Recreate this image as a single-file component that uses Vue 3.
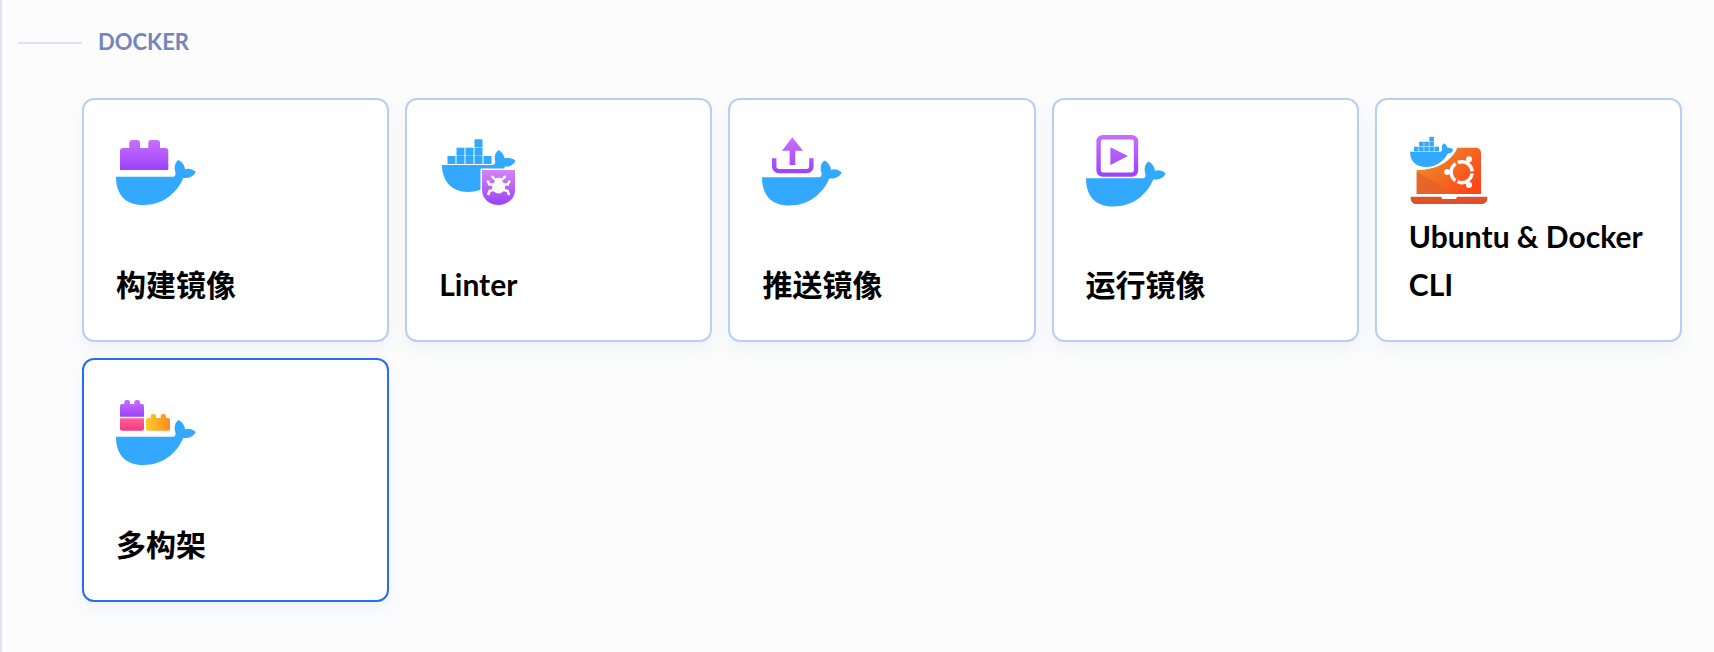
<script setup>
const whale = 'M0 46.7H57C59.5 46.7 60 44 59.3 41.7C58 38 58.5 33 62.3 30C66.5 32 69 36 69 39.6C71 38.3 76 38.3 79.7 42C77.5 46.5 73 48.5 67.3 48C60.5 64 46 75 27.3 75C9 75 0 64 0 46.7Z'
const hull = 'M3 35H53C56 35 56.5 33 56 30C55 26 56.5 22 59.8 20C63 22 65 25 65.8 28.5C69 27.5 74 28 76.5 31C74 35.5 70 37 66 36.5C60 50 46 62 29 62C12 62 3 50 3 35Z'
const smallHull = 'M1 21.7H31C33 21.7 33.5 20 33 18C32.5 16 33.5 14.5 35 13.3C37 14.5 38 16 38.5 18C40.5 17.5 43 18 44.3 20C43 22.5 41 23.5 39 23.3C35 31 27 37 17.7 37C7 37 1 31 1 21.7Z'
const linterBoxes = [
  [8.5, 26], [17.5, 26], [26.5, 26], [35.5, 26], [44.5, 26],
  [17.5, 17.7], [26.5, 17.7], [35.5, 17.7],
  [35.5, 9.3]
]
const ubuntuBoxes = [
  [5, 16.7], [10.1, 16.7], [15.2, 16.7], [20.3, 16.7], [25.4, 16.7],
  [10.1, 11.7], [15.2, 11.7], [20.3, 11.7],
  [20.3, 6.8]
]
</script>

<template>
  <main class="page">
    <header class="heading">
      <span class="rule"></span>
      <h2 class="label">DOCKER</h2>
    </header>
    <section class="grid">
      <article class="card">
        <svg class="icon" viewBox="0 0 80 80">
          <defs>
            <linearGradient id="g1" x1="0" y1="0" x2="0" y2="1"><stop offset="0" stop-color="#c970fb" /><stop offset="1" stop-color="#9a42fd" /></linearGradient>
          </defs>
          <path d="M4 40V21a3 3 0 0 1 3-3h6.3V13a3 3 0 0 1 3-3h4.7a3 3 0 0 1 3 3v5h8.3v-5a3 3 0 0 1 3-3h5.7a3 3 0 0 1 3 3v5h5.3a3 3 0 0 1 3 3v19z" fill="url(#g1)" />
          <path :d="whale" fill="#32a9ff" />
        </svg>
        <h3 class="title">构建镜像</h3>
      </article>

      <article class="card">
        <svg class="icon" viewBox="0 0 80 80">
          <defs>
            <linearGradient id="g2" x1="0" y1="0" x2="0" y2="1"><stop offset="0" stop-color="#d583f6" /><stop offset="1" stop-color="#9a42fd" /></linearGradient>
          </defs>
          <path :d="hull" fill="#32a9ff" />
          <rect v-for="b in linterBoxes" :key="b.join()" :x="b[0]" :y="b[1]" width="8" height="8" fill="#32a9ff" />
          <path d="M43 40H76V60C76 69 68 75 59.5 75C51 75 43 69 43 60Z" fill="url(#g2)" stroke="#fff" stroke-width="3" paint-order="stroke" />
          <g fill="#fff" stroke="#fff" stroke-width="2.6" stroke-linecap="round">
            <ellipse cx="59.6" cy="57" rx="6.5" ry="6.5" stroke="none" />
            <ellipse cx="59.6" cy="50.5" rx="4" ry="2.8" stroke="none" />
            <path d="M55 48.5L53.5 46.8M64.2 48.5L65.7 46.8M54 54.5H50.5L49 51.5M65 54.5H68.7L70.2 51.5M54 60L50.5 61L49.5 64M65 60L68.7 61L69.7 64" fill="none" />
          </g>
        </svg>
        <h3 class="title">Linter</h3>
      </article>

      <article class="card">
        <svg class="icon" viewBox="0 0 80 80">
          <defs>
            <linearGradient id="g3b" gradientUnits="userSpaceOnUse" x1="0" y1="7" x2="0" y2="44"><stop offset="0" stop-color="#c970fb" /><stop offset="1" stop-color="#9a42fd" /></linearGradient>
          </defs>
          <path d="M30.3 7.3L41 20.7H33.3V35H27.6V20.7H20Z" fill="url(#g3b)" />
          <path d="M12.2 28.3V36.5a4.6 4.6 0 0 0 4.6 4.6H44.8a4.6 4.6 0 0 0 4.6-4.6V28.3" fill="none" stroke="url(#g3b)" stroke-width="4.4" />
          <path :d="whale" fill="#32a9ff" transform="translate(0 0.5)" />
        </svg>
        <h3 class="title">推送镜像</h3>
      </article>

      <article class="card">
        <svg class="icon" viewBox="0 0 80 80">
          <defs>
            <linearGradient id="g4" gradientUnits="userSpaceOnUse" x1="0" y1="5" x2="0" y2="47"><stop offset="0" stop-color="#c970fb" /><stop offset="1" stop-color="#9a42fd" /></linearGradient>
          </defs>
          <rect x="12.6" y="7.2" width="37.4" height="37.4" rx="4" fill="none" stroke="url(#g4)" stroke-width="4.4" />
          <path d="M24.4 17.3L42 26L24.4 35Z" fill="url(#g4)" />
          <path :d="whale" fill="#32a9ff" transform="translate(0 1.5)" />
        </svg>
        <h3 class="title">运行镜像</h3>
      </article>

      <article class="card">
        <svg class="icon" viewBox="0 0 80 80">
          <defs>
            <linearGradient id="g5" x1="0" y1="0" x2="1" y2="0.7"><stop offset="0" stop-color="#e39a2c" /><stop offset="1" stop-color="#ff471a" /></linearGradient>
          </defs>
          <path d="M7.7 64V17.7H67a5 5 0 0 1 5 5V64Z" fill="url(#g5)" />
          <path d="M7.7 41.7L44.3 64H7.7Z" fill="#e4602c" opacity="0.75" />
          <path d="M0 5H48.3V17.7C44 28 32 40 7.7 40H0Z" fill="#fff" />
          <path :d="smallHull" fill="#32a9ff" />
          <rect v-for="b in ubuntuBoxes" :key="b.join()" :x="b[0]" :y="b[1]" width="4.6" height="4.6" fill="#32a9ff" />
          <circle cx="52.7" cy="42.2" r="10.5" fill="none" stroke="#fff" stroke-width="3.4" stroke-dasharray="19.6 2.4" stroke-dashoffset="-1.2" />
          <circle cx="60" cy="29.3" r="3" fill="#fff" />
          <circle cx="38.2" cy="42" r="3" fill="#fff" />
          <circle cx="60" cy="55" r="3" fill="#fff" />
          <path d="M1.7 66.7H32L33.5 69H46.8L48.3 66.7H78.3V68.5C78.3 71.5 76 74 73 74H7C4 74 1.7 71.5 1.7 68.5Z" fill="#dd5228" />
        </svg>
        <h3 class="title">Ubuntu &amp; Docker CLI</h3>
      </article>

      <article class="card selected">
        <svg class="icon" viewBox="0 0 80 80">
          <defs>
            <linearGradient id="g6a" x1="0" y1="0" x2="0" y2="1"><stop offset="0" stop-color="#c970fb" /><stop offset="1" stop-color="#9a42fd" /></linearGradient>
            <linearGradient id="g6b" x1="0" y1="0" x2="0" y2="1"><stop offset="0" stop-color="#ff5f96" /><stop offset="1" stop-color="#f03a80" /></linearGradient>
            <linearGradient id="g6c" x1="0" y1="0" x2="1" y2="0"><stop offset="0" stop-color="#ffcb2b" /><stop offset="1" stop-color="#ff8a20" /></linearGradient>
          </defs>
          <path d="M4 26.7V16a2 2 0 0 1 2-2h2.3v-2a2 2 0 0 1 2-2h1.7a2 2 0 0 1 2 2v2h4.3v-2a2 2 0 0 1 2-2h1.7a2 2 0 0 1 2 2v2h2a2 2 0 0 1 2 2v10.7Z" fill="url(#g6a)" />
          <path d="M4 28.3H28V38.7a2 2 0 0 1-2 2H6a2 2 0 0 1-2-2Z" fill="url(#g6b)" />
          <path d="M30 38.7V30a2 2 0 0 1 2-2h2.7v-2a2 2 0 0 1 2-2H38a2 2 0 0 1 2 2v2h4.7v-2a2 2 0 0 1 2-2H48a2 2 0 0 1 2 2v2h2a2 2 0 0 1 2 2v8.7a2 2 0 0 1-2 2H32a2 2 0 0 1-2-2Z" fill="url(#g6c)" />
          <path :d="whale" fill="#32a9ff" />
        </svg>
        <h3 class="title">多构架</h3>
      </article>
    </section>
  </main>
</template>

<style>
html, body {
  background: #fcfcfd;
}
</style>

<style scoped>
.page {
  box-sizing: border-box;
  width: 1714px;
  height: 652px;
  border-left: 2px solid #dfe4f3;
  padding: 28px 32px 0 16px;
  background: #fcfcfd;
  font-family: Lato, "Noto Sans CJK SC", sans-serif;
}
.heading {
  display: flex;
  align-items: center;
  gap: 16px;
  height: 28px;
}
.rule {
  width: 64px;
  height: 2px;
  background: #d9e4f5;
  margin-top: 1px;
}
.label {
  margin: 0;
  font-size: 22px;
  line-height: 28px;
  font-weight: 700;
  color: #7385bb;
}
.grid {
  display: grid;
  grid-template-columns: repeat(5, 1fr);
  grid-auto-rows: 244px;
  gap: 16px;
  margin: 42px 0 0 64px;
}
.card {
  box-sizing: border-box;
  display: flex;
  flex-direction: column;
  align-items: flex-start;
  padding: 30px 32px 32px;
  background: #fff;
  border: 2px solid #b9cfef;
  border-radius: 12px;
  box-shadow: 0 8px 16px rgba(90, 110, 170, 0.07);
}
.selected {
  border-color: #256ef4;
}
.icon {
  display: block;
  width: 80px;
  height: 80px;
  flex: none;
}
.title {
  margin: auto 0 0;
  font-size: 30px;
  line-height: 48px;
  font-weight: 700;
  color: #000;
}
</style>
